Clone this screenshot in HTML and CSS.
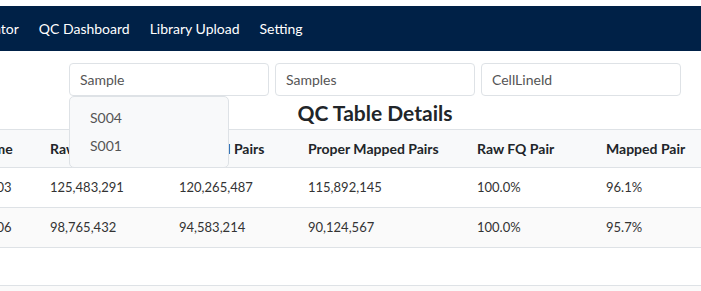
FILE: index.html
```html
<!DOCTYPE html>
<html lang="en">
<head>
    <meta charset="UTF-8">
    <meta name="viewport" content="width=device-width, initial-scale=1.0">
    <title>QC Dashboard</title>
    <link rel="stylesheet" href="styles.css">
</head>
<body>
    <div class="page">
        <nav class="topbar">
            <ul>
                <li><a href="#">Report Generator</a></li>
                <li><a href="#">QC Dashboard</a></li>
                <li><a href="#">Library Upload</a></li>
                <li><a href="#">Setting</a></li>
            </ul>
        </nav>

        <main class="content">
            <div class="filters">
                <div class="filter">
                    <input type="text" placeholder="Sample">
                    <ul class="suggestions">
                        <li>S004</li>
                        <li>S001</li>
                    </ul>
                </div>
                <div class="filter">
                    <input type="text" placeholder="Samples">
                </div>
                <div class="filter">
                    <input type="text" placeholder="CellLineId">
                </div>
            </div>

            <h2 class="title">QC Table Details</h2>

            <table class="qc-table">
                <colgroup>
                    <col class="c-project">
                    <col class="c-name">
                    <col class="c-num">
                    <col class="c-num">
                    <col class="c-wide">
                    <col class="c-num">
                    <col class="c-num">
                    <col>
                </colgroup>
                <thead>
                    <tr>
                        <th>Project</th>
                        <th>Sample Name</th>
                        <th>Raw FQ Pairs</th>
                        <th>Mapped Pairs</th>
                        <th>Proper Mapped Pairs</th>
                        <th>Raw FQ Pair</th>
                        <th>Mapped Pair</th>
                        <th>Proper Pair</th>
                    </tr>
                </thead>
                <tbody>
                    <tr>
                        <td>P01</td>
                        <td>Sample_S0003</td>
                        <td>125,483,291</td>
                        <td>120,265,487</td>
                        <td>115,892,145</td>
                        <td>100.0%</td>
                        <td>96.1%</td>
                        <td>92.4%</td>
                    </tr>
                    <tr>
                        <td>P01</td>
                        <td>Sample_S0006</td>
                        <td>98,765,432</td>
                        <td>94,583,214</td>
                        <td>90,124,567</td>
                        <td>100.0%</td>
                        <td>95.7%</td>
                        <td>91.2%</td>
                    </tr>
                    <tr class="empty">
                        <td colspan="8"></td>
                    </tr>
                    <tr class="empty">
                        <td colspan="8"></td>
                    </tr>
                </tbody>
            </table>
        </main>
    </div>
</body>
</html>
```

FILE: styles.css
```css
body {
    margin: 0;
    font-family: Lato, sans-serif;
    color: #212529;
    background: #fff;
    overflow: hidden;
}
.page {
    width: 1150px;
    margin-left: -200px;
    padding-top: 6px;
}
.topbar {
    background: #002147;
    height: 45px;
    display: flex;
    align-items: center;
}
.topbar ul {
    list-style: none;
    margin: 0;
    padding: 0 0 0 101px;
    display: flex;
}
.topbar a {
    display: block;
    padding: 0 10px;
    color: #fff;
    text-decoration: none;
    font-size: 14px;
}
.content {
    padding-top: 12px;
}
.filters {
    display: flex;
    justify-content: center;
    gap: 6px;
}
.filter {
    position: relative;
}
.filter input {
    box-sizing: border-box;
    width: 200px;
    height: 33px;
    padding: 0 10px;
    border: 1px solid #dee2e6;
    border-radius: 4px;
    font-family: Lato, sans-serif;
    font-size: 14px;
    color: #495057;
}
.filter input::placeholder {
    color: #555;
}
.suggestions {
    position: absolute;
    top: 33px;
    left: 0;
    width: 160px;
    box-sizing: border-box;
    margin: 0;
    padding: 7px 0;
    list-style: none;
    background: #f8f9fa;
    border: 1px solid #dee2e6;
    border-radius: 5px;
    z-index: 10;
}
.suggestions li {
    padding: 4px 20px;
    line-height: 20px;
    font-size: 14px;
    color: #555;
}
.title {
    margin: 5px 0 4px;
    text-align: center;
    font-size: 21px;
    line-height: 24px;
    font-weight: bold;
}
.qc-table {
    width: 100%;
    table-layout: fixed;
    border-collapse: collapse;
    font-size: 13px;
    text-align: left;
}
.c-project { width: 119px; }
.c-name { width: 123px; }
.c-num { width: 129px; }
.c-wide { width: 169px; }
.qc-table th {
    background: #f8f9fa;
    padding: 8px;
    line-height: 21px;
    font-size: 14px;
    font-weight: bold;
    border-top: 1px solid #dee2e6;
    border-bottom: 1px solid #dee2e6;
    white-space: nowrap;
}
.qc-table td {
    padding: 9px 8px;
    line-height: 21px;
    color: #333;
    border-bottom: 1px solid #dee2e6;
    white-space: nowrap;
}
.qc-table tbody tr:nth-child(even) {
    background: #fafafa;
}
.qc-table .empty td {
    height: 19px;
}
```
